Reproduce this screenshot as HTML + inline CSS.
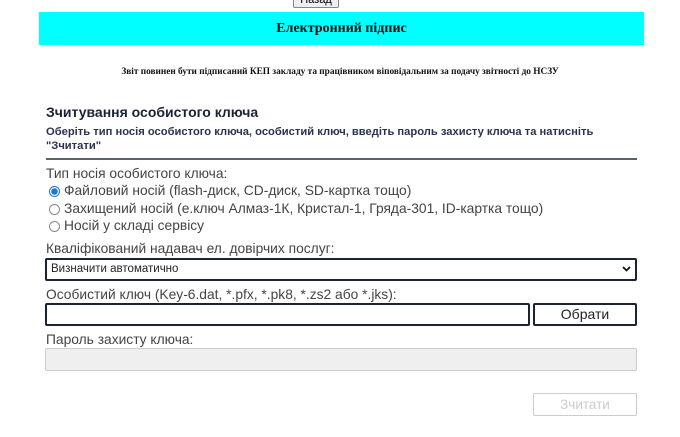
<!DOCTYPE html>
<html><head><meta charset="utf-8"><style>
body{margin:0;width:680px;height:437px;background:#fff;position:relative;overflow:hidden;font-family:"Liberation Sans",sans-serif;color:#333}
.a{position:absolute;box-sizing:border-box}
.lbl{font-size:13.8px;color:#444;white-space:nowrap}
</style></head><body>
<div class="a" style="left:293px;top:-8px;width:46px;height:16px;border:1px solid #888;border-radius:2px;background:#eee;font-size:11px;text-align:center;line-height:15px;color:#000">Назад</div>
<div class="a" style="left:39px;top:12px;width:605px;height:33px;background:#00ffff;text-align:center;line-height:33px;font-family:'Liberation Serif',serif;font-weight:bold;font-size:14px;color:#111">Електронний підпис</div>
<div class="a" style="left:0;top:67px;width:680px;text-align:center;font-family:'Liberation Serif',serif;font-weight:bold;font-size:9.3px;color:#111;white-space:nowrap">Звіт повинен бути підписаний КЕП закладу та працівником віповідальним за подачу звітності до НСЗУ</div>
<div class="a" style="left:46px;top:104px;font-size:14px;font-weight:bold;color:#1a2236">Зчитування особистого ключа</div>
<div class="a" style="left:46px;top:126px;width:560px;font-size:11.2px;font-weight:bold;line-height:13.5px;color:#2a3350">Оберіть тип носія особистого ключа, особистий ключ, введіть пароль захисту ключа та натисніть "Зчитати"</div>
<div class="a" style="left:46px;top:158px;width:591px;height:1.5px;background:#5a6270"></div>
<div class="a lbl" style="left:46px;top:166px">Тип носія особистого ключа:</div>
<div class="a" style="left:49px;top:186px;width:11px;height:11px;border-radius:50%;border:1px solid #1a73e8;background:radial-gradient(circle,#1a73e8 0 3px,#fff 3.5px)"></div>
<div class="a" style="left:49px;top:204px;width:11px;height:11px;border-radius:50%;border:1px solid #888"></div>
<div class="a" style="left:49px;top:221px;width:11px;height:11px;border-radius:50%;border:1px solid #888"></div>
<div class="a lbl" style="left:64px;top:183px">Файловий носій (flash-диск, CD-диск, SD-картка тощо)</div>
<div class="a lbl" style="left:64px;top:201px">Захищений носій (е.ключ Алмаз-1К, Кристал-1, Гряда-301, ID-картка тощо)</div>
<div class="a lbl" style="left:64px;top:218px">Носій у складі сервісу</div>
<div class="a lbl" style="left:46px;top:241px">Кваліфікований надавач ел. довірчих послуг:</div>
<div class="a" style="left:45px;top:258px;width:592px;height:23px;border:2px solid #1a2236;border-radius:2px;font-size:11.5px;line-height:19px;padding-left:4px;color:#222">Визначити автоматично<svg style="position:absolute;right:4px;top:6px" width="9" height="6" viewBox="0 0 9 6"><path d="M1 1l3.5 3.5L8 1" stroke="#111" stroke-width="1.8" fill="none"/></svg></div>
<div class="a lbl" style="left:46px;top:287px">Особистий ключ (Key-6.dat, *.pfx, *.pk8, *.zs2 або *.jks):</div>
<div class="a" style="left:45px;top:303px;width:485px;height:23px;border:2px solid #1a2236;border-radius:2px"></div>
<div class="a" style="left:533px;top:303px;width:104px;height:23px;border:2px solid #1a2236;border-radius:2px;text-align:center;line-height:19px;font-size:14px;color:#222">Обрати</div>
<div class="a lbl" style="left:46px;top:332px">Пароль захисту ключа:</div>
<div class="a" style="left:45px;top:348px;width:592px;height:23px;border:1px solid #ccc;background:#efefef;border-radius:2px"></div>
<div class="a" style="left:533px;top:393px;width:104px;height:23px;border:1px solid #ccc;border-radius:2px;text-align:center;line-height:21px;font-size:13.5px;color:#ccc">Зчитати</div>
</body></html>
